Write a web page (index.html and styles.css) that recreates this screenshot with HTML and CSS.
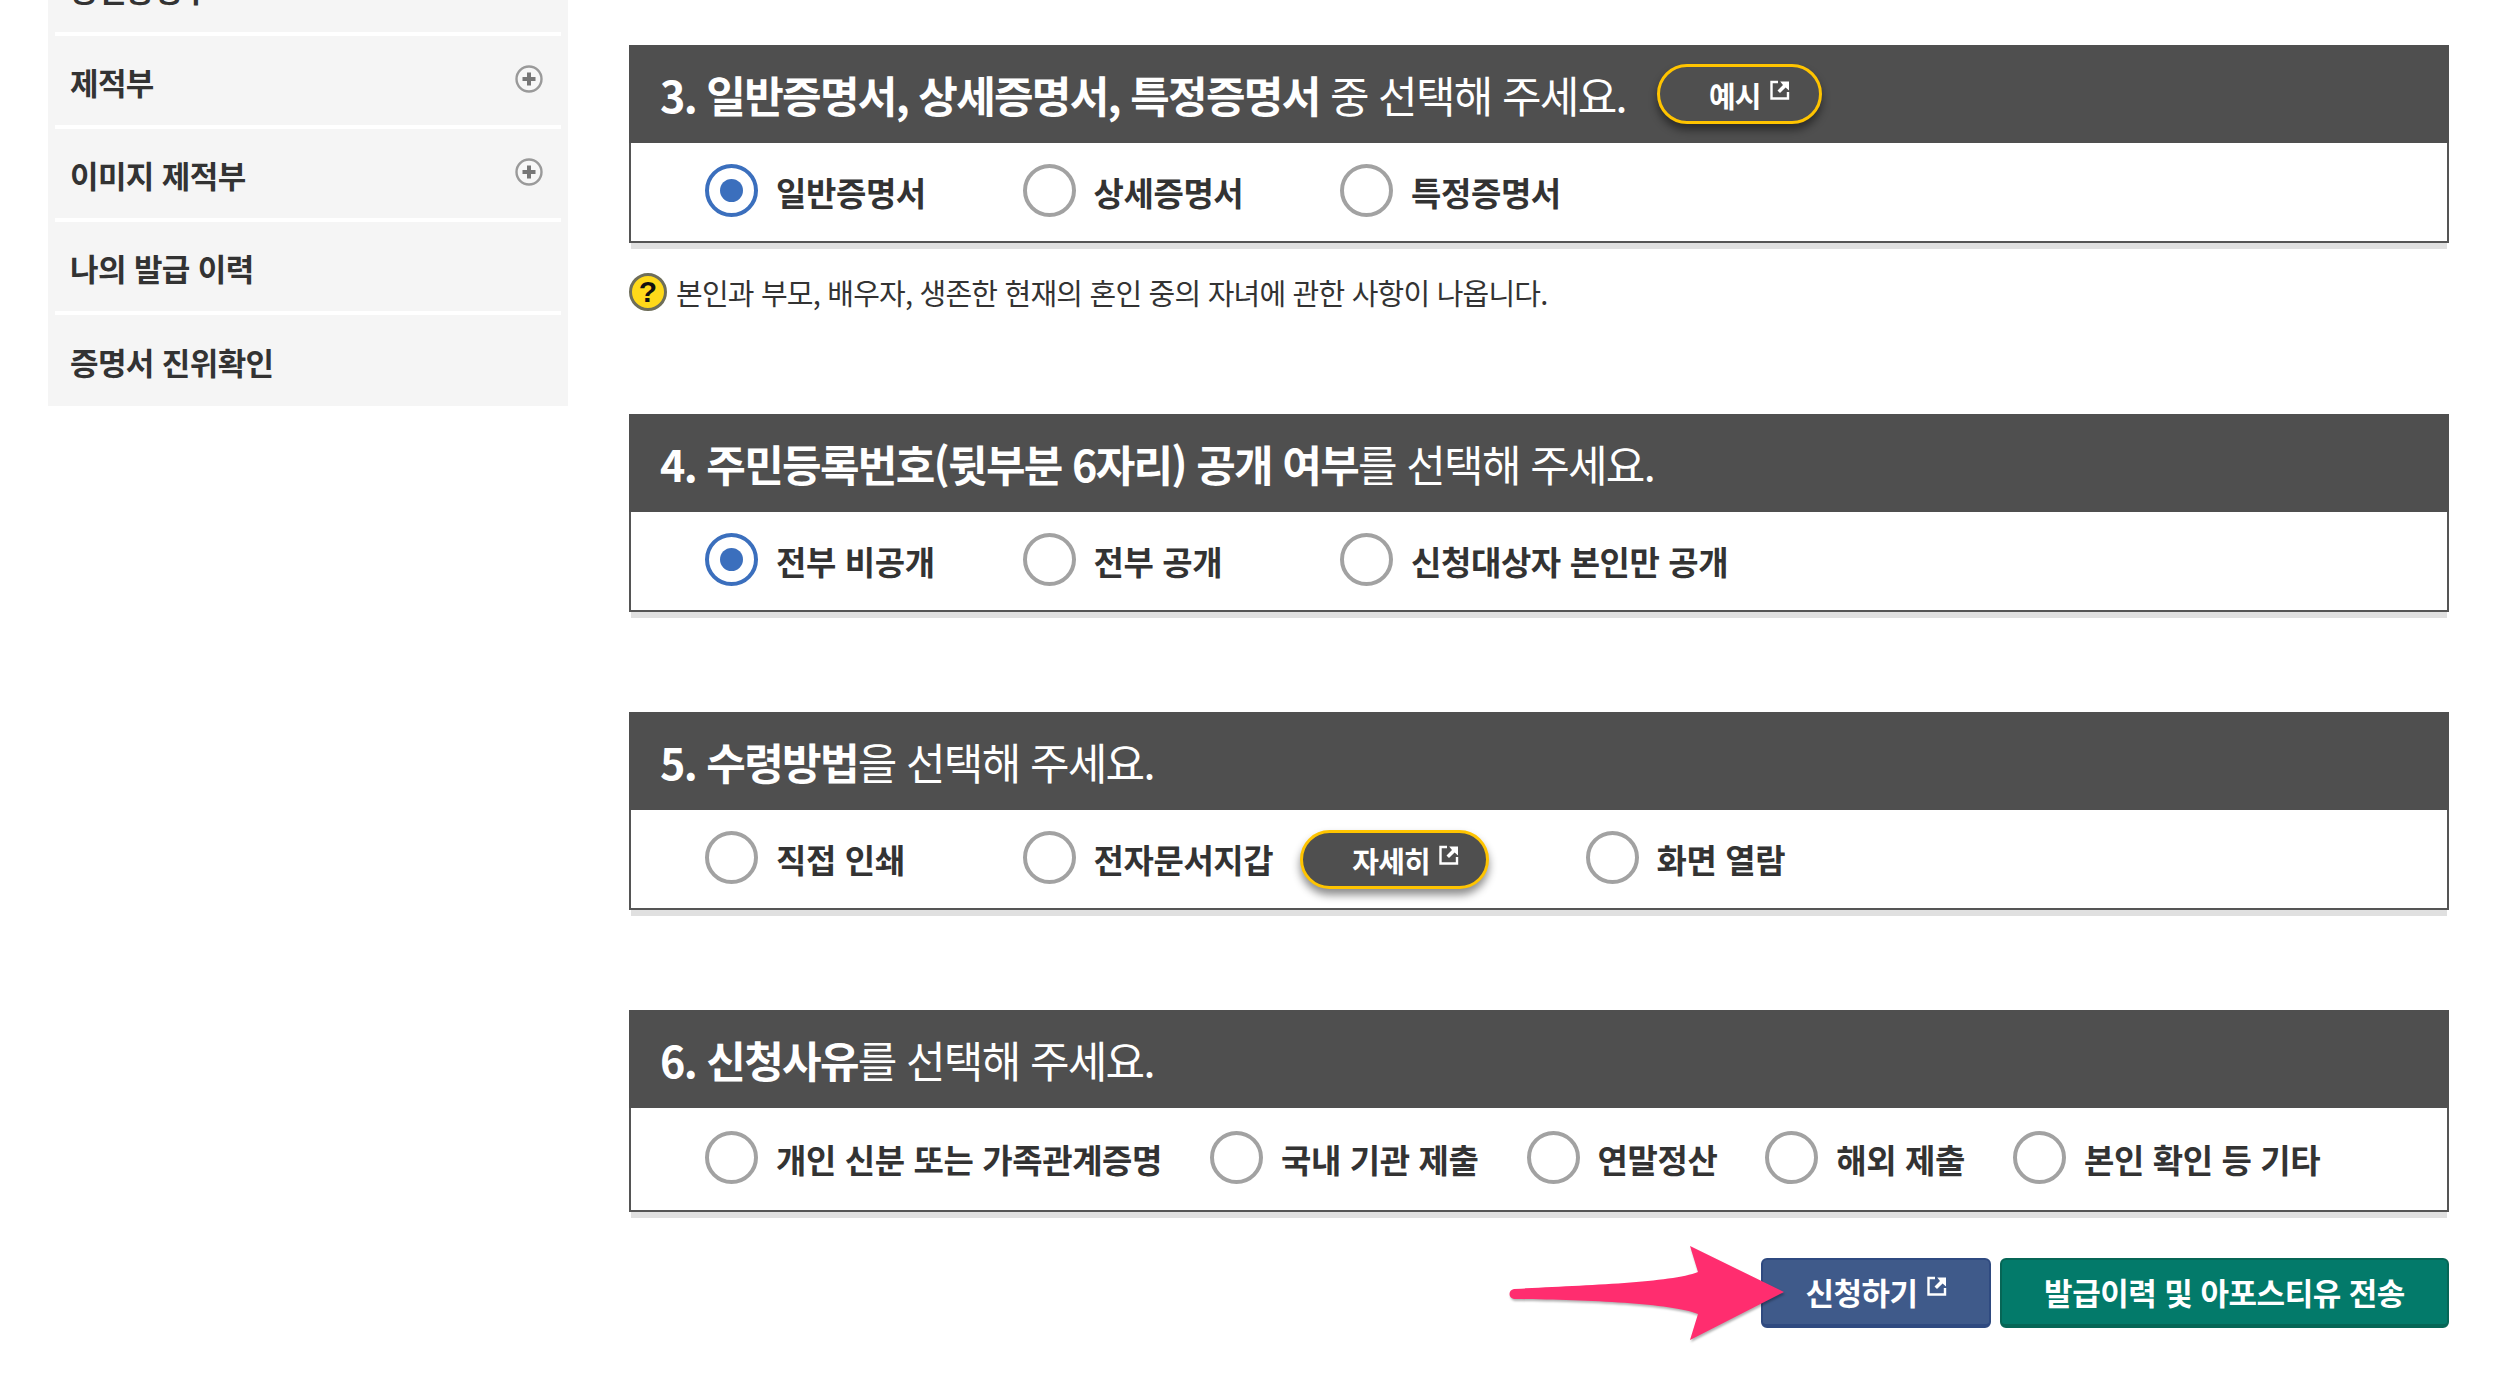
FILE: index.html
```html
<!DOCTYPE html>
<html lang="ko">
<head>
    <meta charset="UTF-8">
    <title>증명서 발급 신청</title>
    <link rel="stylesheet" href="styles.css">
</head>
<body>

    <svg class="defs" width="0" height="0">
        <symbol id="ext" viewBox="0 0 20 20">
            <path d="M8 2H1.5v16.5H18V12" fill="none" stroke="currentColor" stroke-width="2.4"/>
            <path d="M7.5 10.5 13 5l-2.8-3.4H19v8.9L15.6 7.4 10 13z" fill="currentColor"/>
        </symbol>
        <symbol id="plus" viewBox="0 0 28 28">
            <circle cx="14" cy="14" r="12.5" fill="#f7f7f7" stroke="#9a9a9a" stroke-width="2.4"/>
            <path d="M14 7.5v13M7.5 14h13" stroke="#777" stroke-width="4"/>
        </symbol>
    </svg>

    <div class="wrap">
        <!-- 왼쪽 메뉴 -->
        <aside class="sidebar">
            <ul>
                <li>공인증명부</li>
                <li>제적부 <svg class="plus"><use href="#plus"/></svg></li>
                <li>이미지 제적부 <svg class="plus"><use href="#plus"/></svg></li>
                <li>나의 발급 이력</li>
                <li>증명서 진위확인</li>
            </ul>
        </aside>

        <main class="content">
            <section class="panel panel-note">
                <h2><span><strong>3. 일반증명서, 상세증명서, 특정증명서</strong> 중 선택해 주세요.</span>
                    <a class="pill pill-head" href="#">예시 <svg class="ext"><use href="#ext"/></svg></a>
                </h2>
                <div class="options fixed">
                    <label class="opt"><input type="radio" name="q3" checked> 일반증명서</label>
                    <label class="opt"><input type="radio" name="q3"> 상세증명서</label>
                    <label class="opt"><input type="radio" name="q3"> 특정증명서</label>
                </div>
            </section>
            <p class="note"><span class="help">?</span> 본인과 부모, 배우자, 생존한 현재의 혼인 중의 자녀에 관한 사항이 나옵니다.</p>

            <section class="panel">
                <h2><span><strong>4. 주민등록번호(뒷부분 6자리) 공개 여부</strong>를 선택해 주세요.</span></h2>
                <div class="options fixed">
                    <label class="opt"><input type="radio" name="q4" checked> 전부 비공개</label>
                    <label class="opt"><input type="radio" name="q4"> 전부 공개</label>
                    <label class="opt"><input type="radio" name="q4"> 신청대상자 본인만 공개</label>
                </div>
            </section>

            <section class="panel">
                <h2><span><strong>5. 수령방법</strong>을 선택해 주세요.</span></h2>
                <div class="options fixed">
                    <label class="opt"><input type="radio" name="q5"> 직접 인쇄</label>
                    <div class="opt opt-wide">
                        <label class="opt-inner"><input type="radio" name="q5"> 전자문서지갑</label>
                        <a class="pill pill-body" href="#">자세히 <svg class="ext"><use href="#ext"/></svg></a>
                    </div>
                    <label class="opt"><input type="radio" name="q5"> 화면 열람</label>
                </div>
            </section>

            <section class="panel panel-last">
                <h2><span><strong>6. 신청사유</strong>를 선택해 주세요.</span></h2>
                <div class="options loose">
                    <label class="opt-inner"><input type="radio" name="q6"> 개인 신분 또는 가족관계증명</label>
                    <label class="opt-inner"><input type="radio" name="q6"> 국내 기관 제출</label>
                    <label class="opt-inner"><input type="radio" name="q6"> 연말정산</label>
                    <label class="opt-inner"><input type="radio" name="q6"> 해외 제출</label>
                    <label class="opt-inner"><input type="radio" name="q6"> 본인 확인 등 기타</label>
                </div>
            </section>

            <div class="actions">
                <button class="btn btn-blue">신청하기 <svg class="ext"><use href="#ext"/></svg></button>
                <button class="btn btn-green">발급이력 및 아포스티유 전송</button>
                <!-- 강조 화살표 -->
                <svg class="arrow" width="285" height="106" viewBox="0 0 285 106">
                    <path d="M9 49C80 45 165 43 193 32L185 6 279 52 185 100 193 74C165 63 80 60 9 59 3 58 3 50 9 49z" fill="#ff2d6f"/>
                </svg>
            </div>
        </main>
    </div>

</body>
</html>
```

FILE: styles.css
```css
body {
    margin: 0;
    background: #fff;
    color: #333;
    font-family: "Noto Sans CJK KR", "Noto Sans", sans-serif;
}
.defs {
    display: block;
    height: 0;
}
.wrap {
    display: flex;
    align-items: flex-start;
    padding-left: 48px;
}
.sidebar {
    width: 520px;
    flex: none;
    margin-top: -57px;
    margin-right: 61px;
    padding: 0 7px;
    box-sizing: border-box;
    background: #f5f5f5;
}
.sidebar ul {
    margin: 0;
    padding: 0;
    list-style: none;
}
.sidebar li {
    display: flex;
    justify-content: space-between;
    align-items: center;
    height: 93px;
    padding: 2px 18px 0 15px;
    box-sizing: border-box;
    border-bottom: 4px solid #fff;
    font-size: 31px;
    font-weight: 700;
    letter-spacing: -0.6px;
    color: #333;
}
.sidebar li:last-child {
    border-bottom: none;
    height: 91px;
}
.plus {
    width: 28px;
    height: 28px;
    margin-top: -5px;
}
.content {
    width: 1820px;
    flex: none;
    margin-top: 45px;
    padding-bottom: 68px;
}
.panel {
    margin-bottom: 100px;
}
.panel-note {
    margin-bottom: 30px;
}
.panel h2 {
    display: flex;
    align-items: center;
    height: 98px;
    margin: 0;
    padding-left: 31px;
    background: #4f4f4f;
    color: #fff;
    font-size: 43px;
    font-weight: 400;
    letter-spacing: -1.7px;
}
.panel h2 strong {
    font-weight: 700;
}
.options {
    display: flex;
    align-items: center;
    height: 100px;
    padding-left: 74px;
    box-sizing: border-box;
    border: 2px solid #555;
    border-top: none;
    background: #fff;
    box-shadow: 0 8px 0 -2px #e0e0e0;
    font-size: 33px;
    font-weight: 700;
    letter-spacing: -0.4px;
    color: #333;
    white-space: nowrap;
}
.opt {
    display: flex;
    align-items: center;
    width: 317.5px;
    gap: 18px;
}
.opt-wide {
    width: 563px;
    gap: 27px;
}
.opt-inner {
    display: flex;
    align-items: center;
    gap: 18px;
}
.loose {
    height: 104px;
    gap: 48px;
}
input[type="radio"] {
    appearance: none;
    display: block;
    position: relative;
    width: 53px;
    height: 53px;
    flex: none;
    margin: -3px 0 0 0;
    border: 4px solid #a2a2a2;
    border-radius: 50%;
    background: #fff;
}
input[type="radio"]:checked {
    border-color: #3b6fbd;
}
input[type="radio"]:checked::after {
    content: "";
    position: absolute;
    top: 11px;
    left: 11px;
    width: 23px;
    height: 23px;
    border-radius: 50%;
    background: #3b6fbd;
}
.pill {
    display: flex;
    align-items: center;
    gap: 9px;
    padding: 2px 0 0 49px;
    box-sizing: border-box;
    border: 3px solid #ffc400;
    border-radius: 30px;
    background: #4f4f4f;
    color: #fff;
    font-size: 29px;
    font-weight: 700;
    letter-spacing: -0.8px;
    text-decoration: none;
    box-shadow: 0 6px 9px rgba(0, 0, 0, 0.45);
}
.pill-head {
    width: 165px;
    height: 60px;
    margin-left: 31px;
}
.pill-body {
    width: 189px;
    height: 59px;
}
.ext {
    width: 20px;
    height: 20px;
    margin-top: -10px;
    color: #fff;
}
.note {
    display: flex;
    align-items: center;
    gap: 9px;
    height: 38px;
    margin: 30px 0 103px;
    font-size: 29px;
    letter-spacing: -0.8px;
    color: #333;
}
.help {
    display: flex;
    justify-content: center;
    align-items: center;
    width: 38px;
    height: 38px;
    box-sizing: border-box;
    border: 3px solid #6e6e5a;
    border-radius: 50%;
    background: #ffd91a;
    color: #111;
    font-family: "Liberation Sans", sans-serif;
    font-size: 30px;
    font-weight: 700;
    letter-spacing: 0;
}
.panel-last {
    margin-bottom: 46px;
}
.actions {
    display: flex;
    justify-content: flex-end;
    gap: 9px;
    position: relative;
}
.btn {
    display: flex;
    justify-content: center;
    align-items: center;
    gap: 9px;
    height: 70px;
    padding: 0 0 2px;
    box-sizing: border-box;
    border-radius: 6px;
    border-style: solid;
    border-width: 2px 2px 4px;
    color: #fff;
    font-family: inherit;
    font-size: 31px;
    font-weight: 700;
    letter-spacing: -0.5px;
}
.btn-blue {
    width: 230px;
    background: #3f5a8a;
    border-color: #2f4a80;
}
.btn-green {
    width: 449px;
    background: #037a6a;
    border-color: #066656;
}
.arrow {
    position: absolute;
    left: 876px;
    top: -18px;
    filter: drop-shadow(1px 2px 1px rgba(0, 0, 0, 0.3));
}
```
